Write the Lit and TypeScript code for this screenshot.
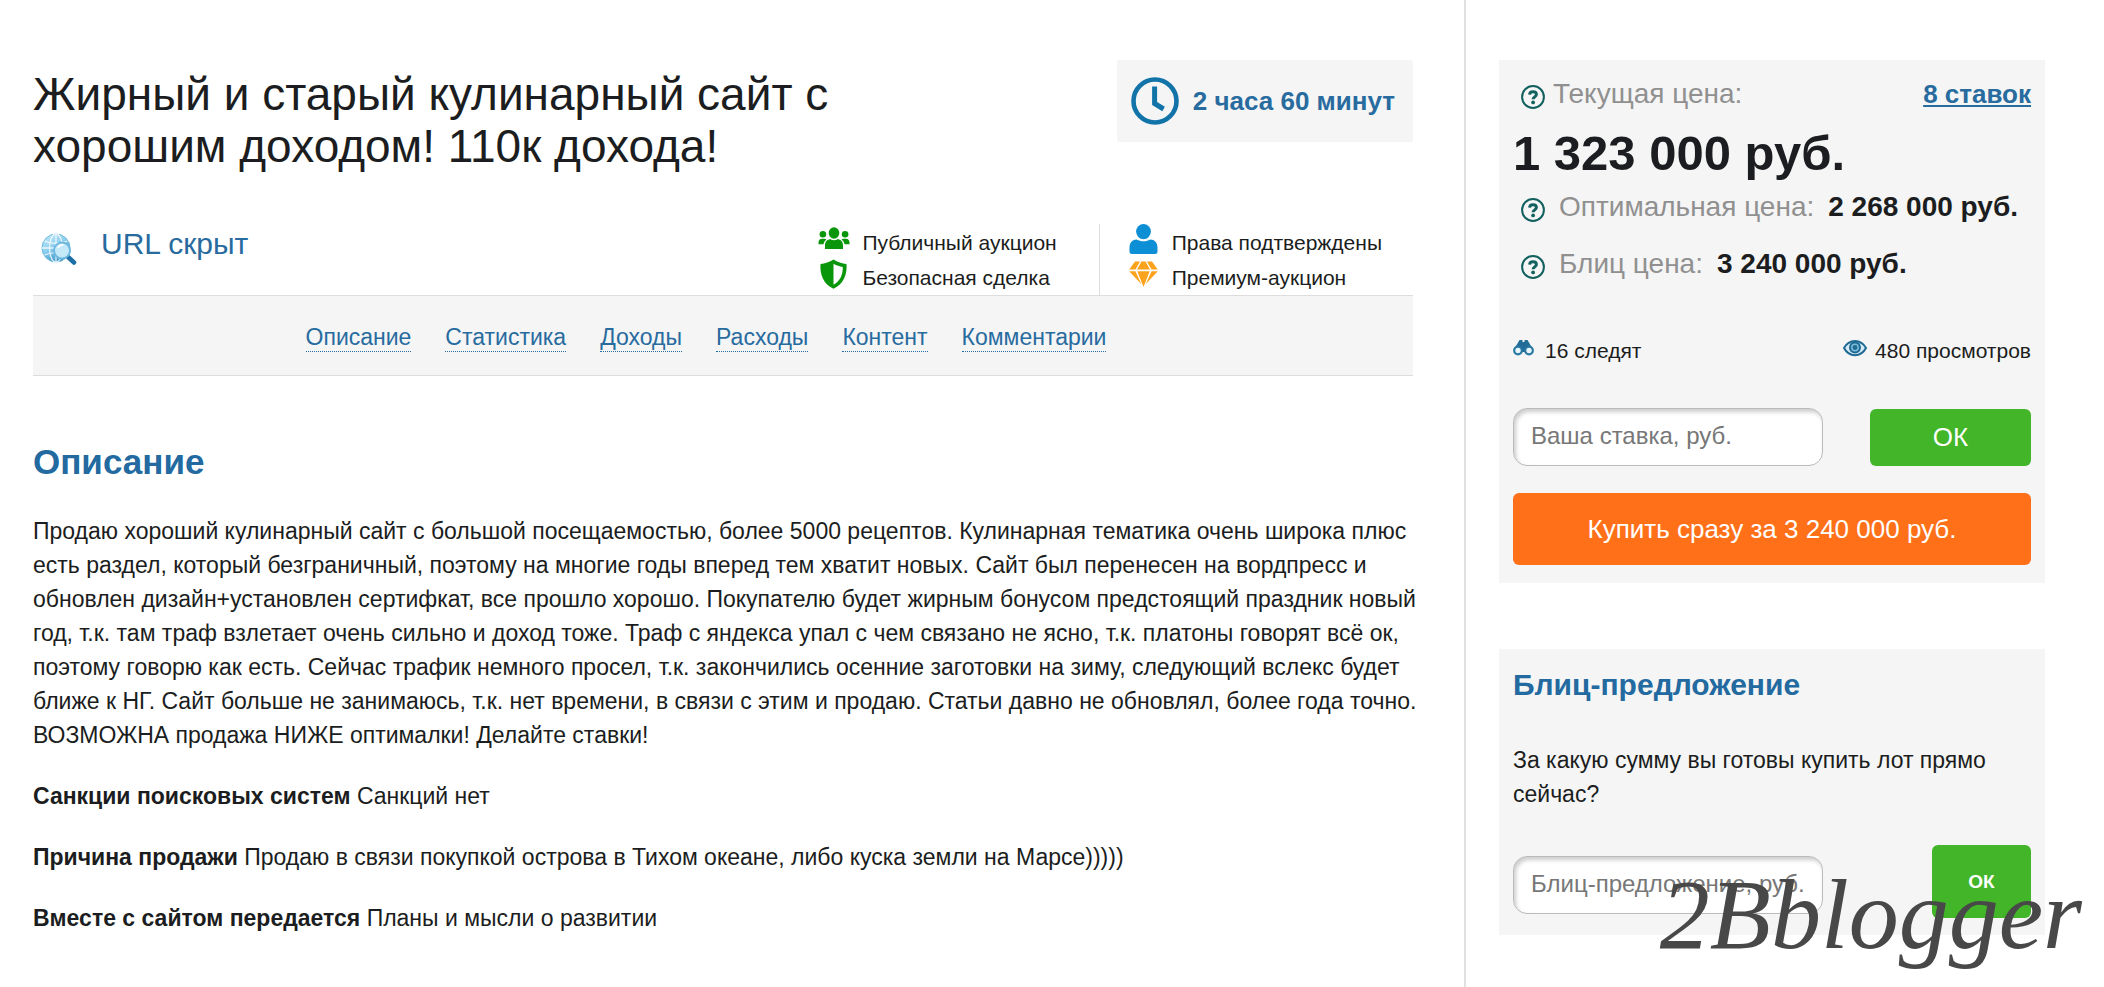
import { LitElement, html, css } from "lit";
import { customElement } from "lit/decorators.js";

const clockIcon = html`<svg class="clock" viewBox="0 0 48 48" aria-hidden="true">
  <circle cx="24" cy="24" r="21.5" fill="none" stroke="#1273a9" stroke-width="4.6" />
  <path d="M23.6 9.5v17l9 5.5" fill="none" stroke="#1273a9" stroke-width="5" />
</svg>`;

const helpIcon = html`<svg class="help" viewBox="0 0 24 24" aria-hidden="true">
  <circle cx="12" cy="12" r="10.9" fill="none" stroke="#12615f" stroke-width="2" />
  <path d="M8.6 9.6C8.7 7.8 10.1 6.7 12 6.7c2 0 3.4 1.1 3.4 2.8 0 2.3-3.3 2.5-3.3 4.8" fill="none" stroke="#12615f" stroke-width="3" />
  <circle cx="12.1" cy="17.4" r="1.9" fill="#12615f" />
</svg>`;

const globeIcon = html`<svg class="globe" viewBox="0 0 36 32" aria-hidden="true">
  <defs>
    <linearGradient id="gl" x1="0" y1="0" x2="0.6" y2="1">
      <stop offset="0" stop-color="#c9ecfa" />
      <stop offset="0.5" stop-color="#8fd0ee" />
      <stop offset="1" stop-color="#3a95c9" />
    </linearGradient>
  </defs>
  <circle cx="15" cy="15" r="14" fill="url(#gl)" stroke="#6cb9de" />
  <g fill="none" stroke="#fff" stroke-width="1.3" opacity="0.8">
    <ellipse cx="15" cy="15" rx="6.5" ry="14" />
    <path d="M15 1v28M1 15h28M3.5 8c7 3 16 3 23 0M3.5 22c7-3 16-3 23 0" />
  </g>
  <path d="M26 23l7 6.5" stroke="#1d6fa5" stroke-width="4.5" stroke-linecap="round" />
  <circle cx="21" cy="17.5" r="8" fill="#c4eafa" stroke="#6fb8de" stroke-width="2" />
  <path d="M17 15c1-2.500 3-3.500 5.500-3" fill="none" stroke="#fff" stroke-width="1.6" />
</svg>`;

const usersIcon = html`<svg class="mark" viewBox="0 0 32 30" fill="#0a960a" aria-hidden="true">
  <ellipse cx="16" cy="9" rx="5.3" ry="5.8" />
  <circle cx="4.9" cy="10.2" r="3.3" />
  <circle cx="27.1" cy="10.2" r="3.3" />
  <path d="M7 25v-3.5c0-4 2.3-6.2 5.5-6.2 1.1.7 2.2 1 3.5 1s2.4-.3 3.500-1c3.200 0 5.500 2.200 5.500 6.200V25z" />
  <path d="M.5 20.200v-1.700c0-2.300 1.400-3.700 3.500-3.700h2.400c.8 0 1.500.3 2.100.7-1.700 1.100-2.600 2.600-3 4.700zM31.500 20.200v-1.700c0-2.300-1.400-3.700-3.500-3.700h-2.400c-.8 0-1.500.3-2.100.7 1.700 1.100 2.600 2.600 3 4.700z" />
</svg>`;

const shieldIcon = html`<svg class="mark" viewBox="0 0 32 30" aria-hidden="true">
  <path d="M15.500.5c4 2.500 8.500 4 13 4.400C29.300 15.500 25.500 25 15.500 29.700 5.500 25 1.700 15.500 2.500 4.900 7 4.500 11.500 3 15.500.5z" fill="#0a960a" />
  <path d="M15.500 4.800c3 1.700 6 2.700 9.300 3.200.1 7.700-2.600 14.200-9.300 17.800z" fill="#fff" />
</svg>`;

const personIcon = html`<svg class="mark" viewBox="0 0 32 30" fill="#0d8fd6" aria-hidden="true">
  <ellipse cx="15.5" cy="7.6" rx="7.4" ry="7.6" />
  <path d="M1.500 27.500v-4c0-5 3-8 7.200-8 2.100 1.200 4.300 1.800 6.800 1.800s4.700-.6 6.800-1.800c4.200 0 7.200 3 7.200 8v4c0 1.700-1 2.500-2.500 2.500H4c-1.500 0-2.500-.8-2.500-2.500z" />
</svg>`;

const gemIcon = html`<svg class="mark" viewBox="0 0 32 30" fill="#fba31c" aria-hidden="true">
  <path d="M7 2.500h5L7.500 10.500H1.200zM13.500 2.500h4l4.500 8H9zM19 2.500h5l5.800 8h-6.300zM1.200 12.200h6.200l6 13zM9.300 12.200h12.400L15.500 28zM23.600 12.200h6.200l-12.200 13z" />
</svg>`;

const binocularsIcon = html`<svg class="stat-icon" viewBox="0 0 24 18" aria-hidden="true">
  <path d="M3 7 6.500 1h3v2h2V1h3l3.500 6 1 3-5 3h-6l-6-3z" fill="#216d98" />
  <circle cx="5" cy="11.500" r="3.800" fill="#e8f5fb" stroke="#2878a3" stroke-width="2.200" />
  <circle cx="16" cy="11.500" r="3.800" fill="#e8f5fb" stroke="#2878a3" stroke-width="2.200" />
</svg>`;

const eyeIcon = html`<svg class="stat-icon" viewBox="0 0 24 18" aria-hidden="true">
  <path d="M1 9C6-.500 18-.500 23 9 18 18.500 6 18.500 1 9z" fill="#d5ecf6" stroke="#1f6a94" stroke-width="2" />
  <circle cx="12" cy="8.500" r="6" fill="#1f6a94" />
  <circle cx="12" cy="8.500" r="3.200" fill="none" stroke="#7dbbd9" stroke-width="1.500" />
</svg>`;

const sections = ["Описание", "Статистика", "Доходы", "Расходы", "Контент", "Комментарии"];

const facts = [
  ["Санкции поисковых систем", "Санкций нет"],
  ["Причина продажи", "Продаю в связи покупкой острова в Тихом океане, либо куска земли на Марсе)))))"],
  ["Вместе с сайтом передается", "Планы и мысли о развитии"],
];

@customElement("app-root")
export class AppRoot extends LitElement {
  static styles = css`
    :host {
      display: block;
      font-family: "Liberation Sans", Arial, sans-serif;
      font-size: 23px;
      line-height: 34px;
      color: #1b1d20;
      background: #fff;
    }
    * {
      box-sizing: border-box;
    }
    h1, h2, p, ul {
      margin: 0;
      padding: 0;
    }
    svg {
      flex: none;
      display: block;
    }
    a {
      color: #286b9f;
    }
    .page {
      position: relative;
      display: grid;
      grid-template-columns: minmax(0, 1fr) 638px;
      min-height: 100vh;
      overflow: hidden;
    }
    .lot {
      padding: 60px 51px 24px 33px;
      border-right: 2px solid #e0e0e0;
    }
    .head {
      display: flex;
      justify-content: space-between;
      align-items: flex-start;
      min-height: 164px;
    }
    h1 {
      max-width: 860px;
      padding-top: 8px;
      font-size: 46px;
      line-height: 52px;
      font-weight: 400;
    }
    .timer {
      display: flex;
      align-items: center;
      gap: 14px;
      height: 82px;
      padding: 0 18px 0 14px;
      border-radius: 3px;
      background: #f5f5f5;
      color: #286b9f;
      font-size: 26px;
      font-weight: 700;
      white-space: nowrap;
    }
    .clock {
      width: 48px;
      height: 48px;
    }
    .meta {
      display: flex;
      justify-content: space-between;
      height: 71px;
    }
    .url {
      display: flex;
      align-items: flex-start;
      gap: 24px;
      padding: 3px 0 0 8px;
      font-size: 30px;
      line-height: 34px;
      color: #286b9f;
    }
    .globe {
      width: 36px;
      height: 32px;
      margin-top: 6px;
    }
    .marks {
      display: flex;
    }
    .marks ul {
      list-style: none;
      padding-right: 31px;
    }
    .marks .deal {
      padding-right: 42px;
    }
    .marks ul + ul {
      padding-left: 28px;
      border-left: 1px solid #ddd;
    }
    .marks li {
      display: flex;
      gap: 12px;
      height: 35px;
      font-size: 21px;
      line-height: 38px;
      white-space: nowrap;
    }
    .mark {
      width: 32px;
      height: 30px;
    }
    nav {
      display: flex;
      justify-content: center;
      align-items: center;
      flex-wrap: wrap;
      gap: 34px;
      min-height: 81px;
      padding: 3px 34px 0 0;
      border: solid #ddd;
      border-width: 1px 0;
      background: #f5f5f5;
    }
    nav a {
      text-decoration: none;
      line-height: 28px;
      border-bottom: 1px dotted #286b9f;
    }
    h2 {
      color: #226a9f;
      font-size: 35px;
      line-height: 40px;
    }
    .text {
      display: grid;
      gap: 27px;
      margin-right: -12px;
      padding-top: 66px;
    }
    .text h2 {
      padding-bottom: 5px;
    }
    aside {
      display: grid;
      align-content: start;
      gap: 66px;
      padding: 60px 59px 24px 33px;
    }
    .card {
      padding: 0 14px;
      background: #f5f5f5;
    }
    .row {
      display: flex;
      align-items: center;
    }
    .price {
      height: 57px;
      padding-left: 8px;
      font-size: 28px;
      white-space: nowrap;
      color: #909090;
    }
    .price b {
      margin-left: 14px;
      color: #1b1d20;
    }
    .help {
      width: 24px;
      height: 24px;
      margin: 6px 14px 0 0;
    }
    .current {
      height: 68px;
    }
    .current .help {
      margin-right: 8px;
    }
    .bids {
      margin-left: auto;
      font-size: 26px;
      font-weight: 700;
    }
    .sum {
      font-size: 49px;
      line-height: 50px;
      font-weight: 700;
    }
    .stats {
      justify-content: space-between;
      padding-top: 42px;
      font-size: 21px;
    }
    .stats span {
      display: flex;
      gap: 8px;
    }
    .stat-icon {
      width: 24px;
      height: 18px;
      margin-top: 5px;
    }
    .bid {
      justify-content: space-between;
      padding-top: 40px;
    }
    input, button {
      font: inherit;
      border: 0;
    }
    input {
      width: 310px;
      height: 58px;
      padding: 0 17px 2px;
      border: 1px solid #bbb;
      border-radius: 14px;
      background: #fff;
      box-shadow: inset 2px 3px 4px #ccc;
      font-size: 24px;
      color: #1b1d20;
    }
    input::placeholder {
      color: #777;
      opacity: 1;
    }
    button {
      border-radius: 6px;
      background: #43b529;
      color: #fff;
      font-size: 26px;
      cursor: pointer;
    }
    .ok {
      width: 161px;
      height: 57px;
    }
    .buy {
      width: 100%;
      height: 72px;
      margin: 27px 0 18px;
      background: #ff7019;
    }
    .blitz {
      padding-bottom: 17px;
    }
    .blitz h2 {
      padding: 16px 0 38px;
      font-size: 30px;
    }
    .blitz .bid {
      padding-top: 34px;
    }
    .blitz input {
      margin-top: 6px;
    }
    .small {
      width: 99px;
      height: 73px;
      font-size: 19px;
      font-weight: 700;
    }
    .sign {
      position: absolute;
      right: 22px;
      bottom: 8px;
      font-family: "Liberation Serif", serif;
      font-style: italic;
      font-size: 100px;
      line-height: 128px;
      color: #484848;
      pointer-events: none;
    }
    @media (max-width: 1500px) {
      .page {
        grid-template-columns: minmax(0, 1fr);
      }
      .lot {
        border-right: 0;
      }
      .head, .meta {
        flex-wrap: wrap;
        height: auto;
        gap: 20px;
      }
    }
  `;

  render() {
    return html`
      <div class="page">
        <main class="lot">
          <header class="head">
            <h1>Жирный и старый кулинарный сайт с хорошим доходом! 110к дохода!</h1>
            <div class="timer">${clockIcon}<span>2 часа 60 минут</span></div>
          </header>
          <div class="meta">
            <div class="url">${globeIcon}<span>URL скрыт</span></div>
            <div class="marks">
              <ul class="deal">
                <li>${usersIcon}Публичный аукцион</li>
                <li>${shieldIcon}Безопасная сделка</li>
              </ul>
              <ul>
                <li>${personIcon}Права подтверждены</li>
                <li>${gemIcon}Премиум-аукцион</li>
              </ul>
            </div>
          </div>
          <nav>${sections.map((s) => html`<a href="#">${s}</a>`)}</nav>
          <section class="text">
            <h2>Описание</h2>
            <p>
              Продаю хороший кулинарный сайт с большой посещаемостью, более 5000 рецептов. Кулинарная тематика очень
              широка плюс есть раздел, который безграничный, поэтому на многие годы вперед тем хватит новых. Сайт был
              перенесен на вордпресс и обновлен дизайн+установлен сертифкат, все прошло хорошо. Покупателю будет жирным
              бонусом предстоящий праздник новый год, т.к. там траф взлетает очень сильно и доход тоже. Траф с яндекса
              упал с чем связано не ясно, т.к. платоны говорят всё ок, поэтому говорю как есть. Сейчас трафик немного
              просел, т.к. закончились осенние заготовки на зиму, следующий вслекс будет ближе к НГ. Сайт больше не
              занимаюсь, т.к. нет времени, в связи с этим и продаю. Статьи давно не обновлял, более года точно.
              ВОЗМОЖНА продажа НИЖЕ оптималки! Делайте ставки!
            </p>
            ${facts.map(([name, value]) => html`<p><b>${name}</b> ${value}</p>`)}
          </section>
        </main>
        <aside>
          <section class="card">
            <div class="row price current">
              ${helpIcon}<span>Текущая цена:</span><a class="bids" href="#">8 ставок</a>
            </div>
            <p class="sum">1 323 000 руб.</p>
            <div class="row price">${helpIcon}<span>Оптимальная цена:</span><b>2 268 000 руб.</b></div>
            <div class="row price">${helpIcon}<span>Блиц цена:</span><b>3 240 000 руб.</b></div>
            <div class="row stats">
              <span>${binocularsIcon}16 следят</span>
              <span>${eyeIcon}480 просмотров</span>
            </div>
            <div class="row bid">
              <input type="text" aria-label="Ваша ставка, руб." placeholder="Ваша ставка, руб." />
              <button class="ok" type="button">ОК</button>
            </div>
            <button class="buy" type="button">Купить сразу за 3 240 000 руб.</button>
          </section>
          <section class="card blitz">
            <h2>Блиц-предложение</h2>
            <p>За какую сумму вы готовы купить лот прямо сейчас?</p>
            <div class="row bid">
              <input type="text" aria-label="Блиц-предложение, руб." placeholder="Блиц-предложение, руб." />
              <button class="small" type="button">ОК</button>
            </div>
          </section>
        </aside>
        <div class="sign">2Bblogger</div>
      </div>
    `;
  }
}
